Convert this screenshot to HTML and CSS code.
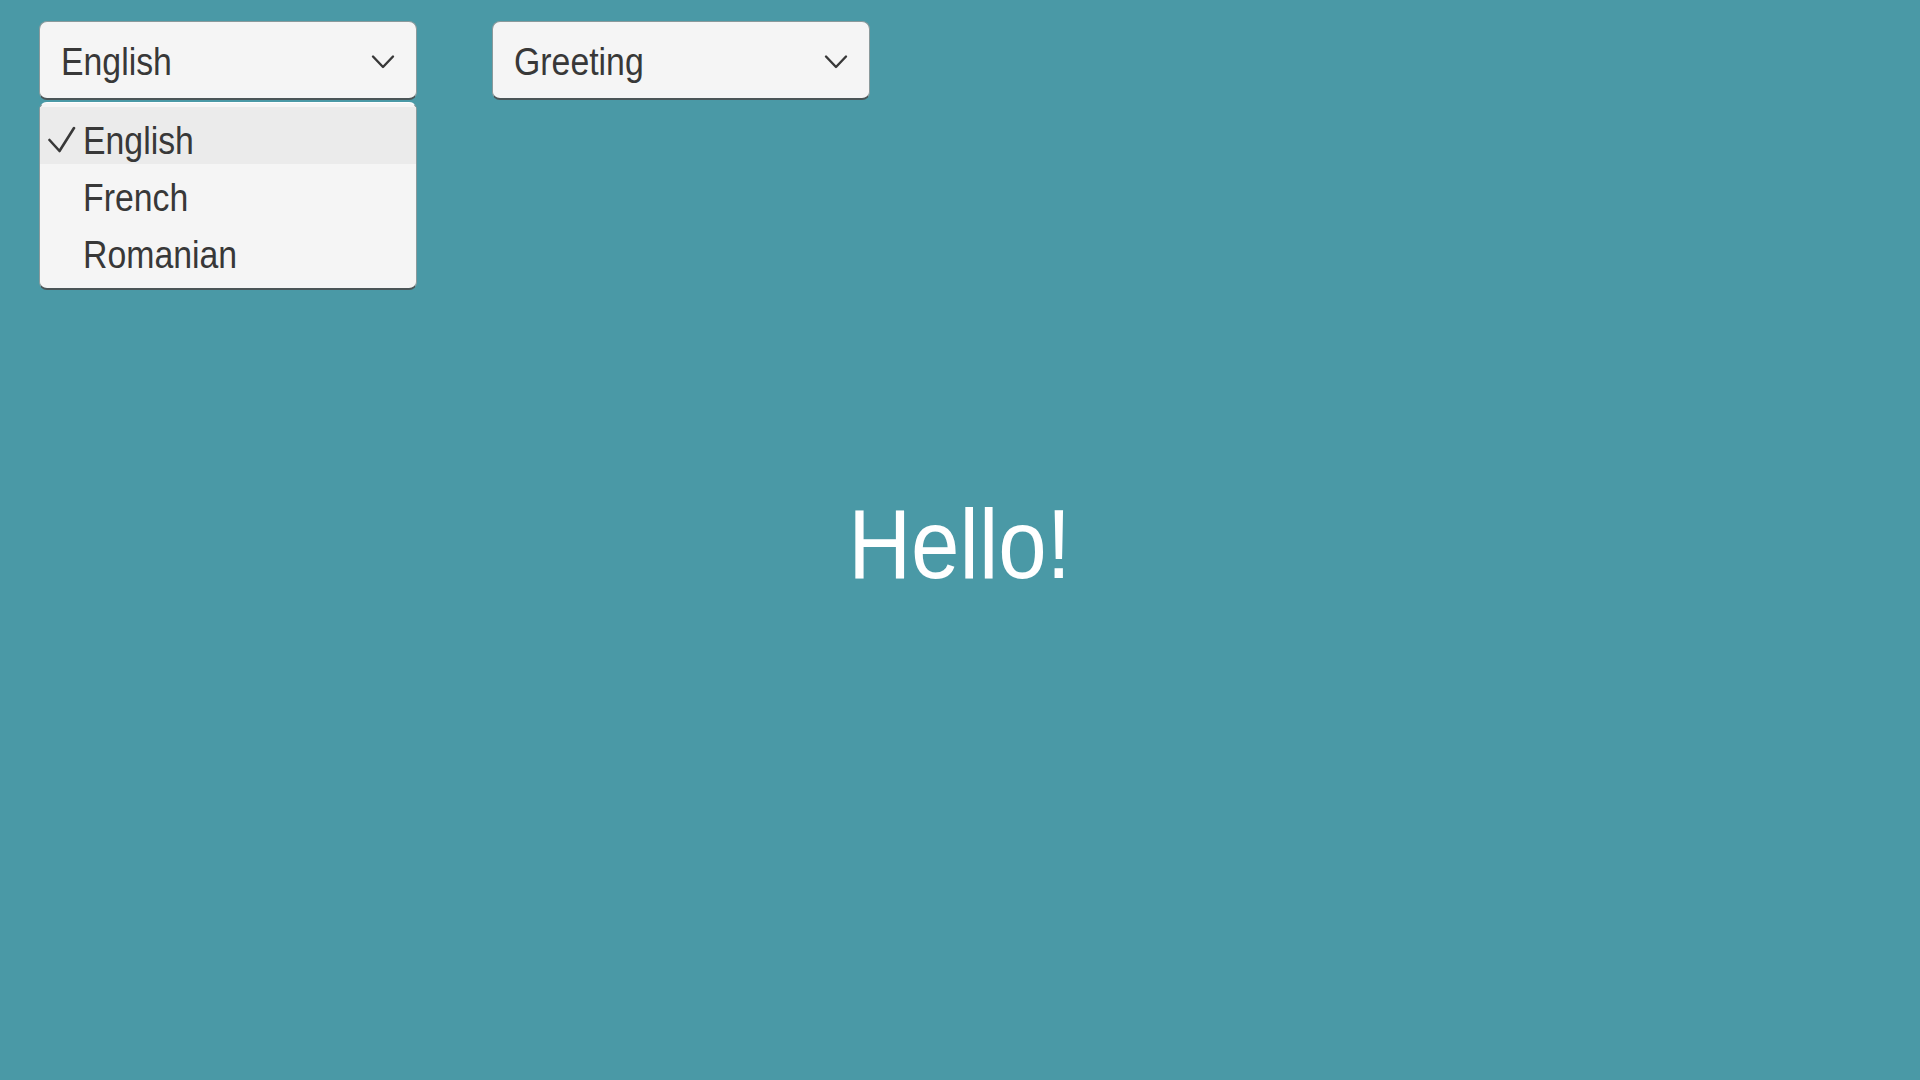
FILE: index.html
```html
<!DOCTYPE html>
<html lang="en">
<head>
<meta charset="utf-8">
<title>Greeting</title>
<link rel="stylesheet" href="styles.css">
</head>
<body>
<div class="app">
  <main class="stage">
    <div class="greeting"><span class="squeeze-center">Hello!</span></div>
  </main>
  <header class="toolbar">
    <div class="dropdown-wrap">
      <div class="dropdown">
        <span class="label">English</span>
        <svg class="chevron" width="24" height="16" viewBox="0 0 24 16"><path d="M2 2.5 L12 13 L22 2.5" fill="none" stroke="#383838" stroke-width="2.4" stroke-linecap="round" stroke-linejoin="round"/></svg>
      </div>
      <ul class="menu">
        <li class="item selected">
          <span class="check"><svg width="28" height="30" viewBox="0 0 28 30"><path d="M1.5 16 L11.5 27 L26 4" fill="none" stroke="#383838" stroke-width="2.6" stroke-linecap="round" stroke-linejoin="round"/></svg></span>
          <span class="label">English</span>
        </li>
        <li class="item"><span class="check"></span><span class="label">French</span></li>
        <li class="item"><span class="check"></span><span class="label">Romanian</span></li>
      </ul>
    </div>
    <div class="dropdown-wrap">
      <div class="dropdown">
        <span class="label">Greeting</span>
        <svg class="chevron" width="24" height="16" viewBox="0 0 24 16"><path d="M2 2.5 L12 13 L22 2.5" fill="none" stroke="#383838" stroke-width="2.4" stroke-linecap="round" stroke-linejoin="round"/></svg>
      </div>
    </div>
  </header>
</div>
</body>
</html>
```
FILE: styles.css
```css
html, body {
  margin: 0;
  padding: 0;
}
body {
  background: #4a99a6;
  font-family: "Liberation Sans", Arial, sans-serif;
  color: #383838;
  overflow: hidden;
}
.app {
  display: grid;
  grid-template-areas: "cell";
  width: 100vw;
  height: 100vh;
}
.stage {
  grid-area: cell;
  display: flex;
  align-items: center;
  justify-content: center;
}
.greeting {
  color: #ffffff;
  font-size: 99px;
  line-height: 1;
  padding-top: 6px;
}
.squeeze-center {
  display: inline-block;
  transform: scaleX(0.88);
  transform-origin: center;
}
.toolbar {
  grid-area: cell;
  align-self: start;
  display: flex;
  gap: 75px;
  padding: 21px 0 0 39px;
  position: relative;
  z-index: 1;
}
.dropdown-wrap {
  position: relative;
  width: 378px;
}
.dropdown {
  box-sizing: border-box;
  height: 79px;
  background: #f5f5f5;
  border: 1px solid #8a9a9c;
  border-bottom: 2px solid #4b5557;
  border-radius: 8px;
  display: flex;
  align-items: center;
  justify-content: space-between;
  padding: 3px 21px 0 21px;
}
.label {
  display: inline-block;
  font-size: 38px;
  line-height: 1;
  transform: scaleX(0.89);
  transform-origin: left center;
  white-space: nowrap;
}
.chevron {
  display: block;
  flex: none;
}
.menu {
  position: absolute;
  left: 0;
  top: 81px;
  width: 378px;
  box-sizing: border-box;
  margin: 0;
  list-style: none;
  padding: 4px 0 10px;
  background: #f5f5f5;
  border: 1px solid #8a9a9c;
  border-top-color: #ffffff;
  border-bottom: 2px solid #4b5557;
  border-radius: 8px;
}
.item {
  box-sizing: border-box;
  height: 57px;
  display: flex;
  align-items: flex-start;
  padding: 11px 0 0 8px;
}
.item .label {
  line-height: 46px;
}
.item.selected {
  background: #ebebeb;
}
.check {
  flex: none;
  width: 35px;
  height: 46px;
  display: flex;
  align-items: center;
}
.check svg {
  display: block;
  margin-top: -4px;
}
```
